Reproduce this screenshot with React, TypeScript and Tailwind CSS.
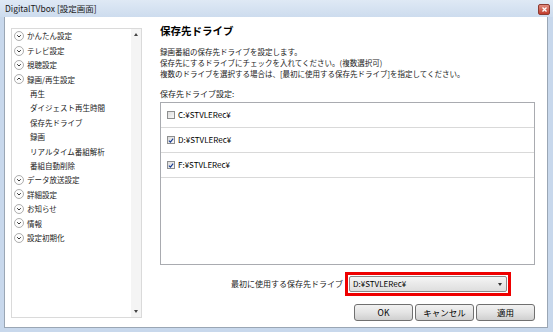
import React from 'react';

const FONT = '"Noto Sans CJK JP", "Noto Sans", sans-serif';

type TreeItem = { label: string; level: 0 | 1; open?: boolean };

const TREE: TreeItem[] = [
  { label: 'かんたん設定', level: 0 },
  { label: 'テレビ設定', level: 0 },
  { label: '視聴設定', level: 0 },
  { label: '録画/再生設定', level: 0, open: true },
  { label: '再生', level: 1 },
  { label: 'ダイジェスト再生時間', level: 1 },
  { label: '保存先ドライブ', level: 1 },
  { label: '録画', level: 1 },
  { label: 'リアルタイム番組解析', level: 1 },
  { label: '番組自動削除', level: 1 },
  { label: 'データ放送設定', level: 0 },
  { label: '詳細設定', level: 0 },
  { label: 'お知らせ', level: 0 },
  { label: '情報', level: 0 },
  { label: '設定初期化', level: 0 },
];

const DRIVES = [
  { path: 'C:¥STVLERec¥', checked: false },
  { path: 'D:¥STVLERec¥', checked: true },
  { path: 'F:¥STVLERec¥', checked: true },
];

function ExpandCircle({ open }: { open?: boolean }) {
  return (
    <svg width="10" height="10" viewBox="0 0 10 10" className="shrink-0">
      <circle cx="5" cy="5" r="4.5" fill="#fdfdfd" stroke="#9a9a9a" strokeWidth="0.8" />
      {open ? (
        <path d="M3.2 5.8 L5 4 L6.8 5.8" fill="none" stroke="#333" strokeWidth="1" />
      ) : (
        <path d="M3.2 4.2 L5 6 L6.8 4.2" fill="none" stroke="#333" strokeWidth="1" />
      )}
    </svg>
  );
}

function CheckBox({ checked }: { checked: boolean }) {
  return (
    <div className="w-[8px] h-[8px] border border-[#8e8f8f] bg-gradient-to-br from-[#dcdcdc] to-[#f8f8f8] flex items-center justify-center shrink-0">
      {checked && (
        <svg width="7" height="7" viewBox="0 0 7 7">
          <path d="M1 3.6 L2.8 5.4 L6 1.2" fill="none" stroke="#1c3f94" strokeWidth="1.4" />
        </svg>
      )}
    </div>
  );
}

function Button({ children }: { children: React.ReactNode }) {
  return (
    <button className="h-[17px] w-[59px] rounded-[3px] border border-[#707070] bg-gradient-to-b from-[#f2f2f2] via-[#e4e4e4] to-[#cfcfcf] text-[8.5px] text-black flex items-center justify-center leading-none">
      {children}
    </button>
  );
}

export default function App() {
  return (
    <div
      className="w-[553px] h-[332px] bg-[#c8d8ec] flex flex-col overflow-hidden"
      style={{ fontFamily: FONT }}
    >
      {/* Title bar */}
      <div className="h-[17px] flex items-start justify-between bg-gradient-to-b from-[#dfe9f5] to-[#cddcee] pl-[5px] pr-[3px]">
        <span className="text-[8.5px] text-[#1a1a1a] leading-[17px]">DigitalTVbox [設定画面]</span>
        <div className="mt-[4px] w-[12px] h-[11px] rounded-[2px] bg-gradient-to-b from-[#e08a7e] to-[#c23b2b] border border-[#8d3a30] flex items-center justify-center">
          <svg width="5" height="5" viewBox="0 0 5 5">
            <path d="M0.5 0.5 L4.5 4.5 M4.5 0.5 L0.5 4.5" stroke="#fff" strokeWidth="1.3" />
          </svg>
        </div>
      </div>

      {/* Window body */}
      <div className="flex-1 flex pl-[4px] pr-[5px] pb-[4px]">
        <div className="flex-1 bg-white border border-[#9aa6b4] border-t-0 flex">
          {/* Left tree */}
          <div className="ml-[6px] mt-[11px] w-[131px] h-[290px] border border-[#dadada] flex">
            <div className="flex-1 flex flex-col text-[7.5px] text-[#1a1a1a]">
              {TREE.map((item) =>
                item.level === 0 ? (
                  <div key={item.label} className="h-[14.4px] flex items-center pl-[2px] gap-[3px]">
                    <ExpandCircle open={item.open} />
                    <span className="leading-none">{item.label}</span>
                  </div>
                ) : (
                  <div key={item.label} className="h-[14.4px] flex items-center pl-[18px]">
                    <span className="leading-none">{item.label}</span>
                  </div>
                )
              )}
            </div>
            <div className="w-[10px] bg-[#f4f4f4] flex flex-col items-center justify-between py-[4px] text-[#555]">
              <svg width="4" height="3" viewBox="0 0 4 3">
                <path d="M0 3 L2 0 L4 3 Z" fill="#444" />
              </svg>
              <svg width="4" height="3" viewBox="0 0 4 3">
                <path d="M0 0 L4 0 L2 3 Z" fill="#444" />
              </svg>
            </div>
          </div>

          {/* Right content */}
          <div className="ml-[18px] w-[375px] flex flex-col">
            <div className="mt-[7px] h-[14px] text-[10.5px] font-bold leading-[14px] text-black">保存先ドライブ</div>
            <div className="mt-[8px] text-[7.5px] leading-[11px] text-[#1a1a1a]">
              <div>録画番組の保存先ドライブを設定します。</div>
              <div>保存先にするドライブにチェックを入れてください。(複数選択可)</div>
              <div>複数のドライブを選択する場合は、[最初に使用する保存先ドライブ]を指定してください。</div>
            </div>
            <div className="mt-[9px] text-[8px] leading-[11px] text-[#1a1a1a]">保存先ドライブ設定:</div>

            <div className="mt-[3px] h-[163px] border border-[#a9abb0] flex flex-col">
              {DRIVES.map((d) => (
                <div key={d.path} className="h-[25px] shrink-0 border-b border-[#d9d9d9] flex items-center pl-[6px] gap-[3px]">
                  <CheckBox checked={d.checked} />
                  <span className="text-[8px] leading-none text-black">{d.path}</span>
                </div>
              ))}
            </div>

            <div className="mt-[7px] flex items-center justify-end pr-[24px] gap-[2px]">
              <span className="text-[8px] text-[#1a1a1a] leading-none">最初に使用する保存先ドライブ</span>
              <div className="w-[166px] h-[24px] border-[3px] border-[#ee0000] p-[1px]">
                <div className="h-full rounded-[2px] border border-[#8a8a8a] bg-gradient-to-b from-[#f5f5f5] to-[#dedede] flex items-center justify-between pl-[3px] pr-[4px]">
                  <span className="text-[8px] leading-none text-black">D:¥STVLERec¥</span>
                  <svg width="4" height="3" viewBox="0 0 4 3">
                    <path d="M0 0 L4 0 L2 3 Z" fill="#333" />
                  </svg>
                </div>
              </div>
            </div>

            <div className="mt-[8px] flex justify-end gap-[2px]">
              <Button>OK</Button>
              <Button>キャンセル</Button>
              <Button>適用</Button>
            </div>
          </div>
        </div>
      </div>
    </div>
  );
}
